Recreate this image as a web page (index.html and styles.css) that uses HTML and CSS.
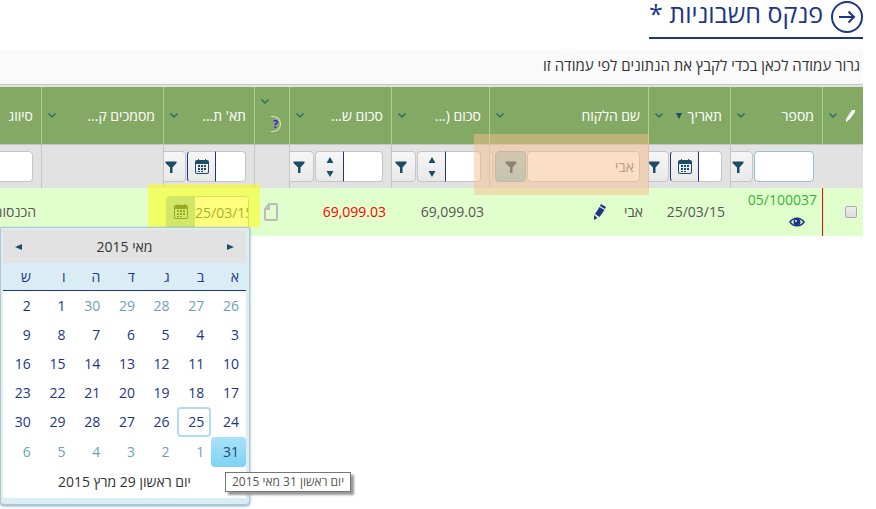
FILE: index.html
```html
<!DOCTYPE html>
<html lang="he" dir="rtl">
<head>
    <meta charset="UTF-8">
    <meta name="viewport" content="width=device-width, initial-scale=1.0">
    <title>פנקס חשבוניות</title>
    <link rel="stylesheet" href="styles.css">
</head>
<body>
    <!-- shared icons -->
    <svg class="sprite" aria-hidden="true">
        <symbol id="funnel" viewBox="0 0 12 12"><path d="M0.500 0.500h11v1.500L7.500 6.500V12H5V6.500L0.500 2z"/></symbol>
        <symbol id="cal" viewBox="0 0 14 16">
            <path fill-rule="evenodd" d="M2 1h10a2 2 0 0 1 2 2v10a2 2 0 0 1-2 2H2a2 2 0 0 1-2-2V3a2 2 0 0 1 2-2zM1 5v8a1 1 0 0 0 1 1h10a1 1 0 0 0 1-1V5z"/>
            <path d="M3 0h1v3H3zM10 0h1v3h-1zM6 6h2v2H6zM9 6h2v2H9zM3 9h2v2H3zM6 9h2v2H6zM9 9h2v2H9zM3 12h2v1H3zM6 12h2v1H6zM3 6h2v2H3z"/>
        </symbol>
        <symbol id="down" viewBox="0 0 8 5"><path d="M0.500 0.500L4 4l3.500-3.500" fill="none" stroke="currentColor" stroke-width="1.400"/></symbol>
        <symbol id="spin" viewBox="0 0 8 22"><path d="M4 1l3.500 6h-7zM4 21l3.500-6h-7z"/></symbol>
    </svg>

    <main class="page">
        <header class="title">
            <a href="#" class="back" aria-label="חזרה">
                <svg width="32" height="32" viewBox="0 0 32 32"><circle cx="16" cy="16" r="15"/><path d="M8 16h15M17.500 10.500L23 16l-5.500 5.500"/></svg>
            </a>
            <h1>פנקס חשבוניות *</h1>
        </header>

        <div class="group-bar">גרור עמודה לכאן בכדי לקבץ את הנתונים לפי עמודה זו</div>

        <div class="grid">
            <table>
                <colgroup>
                    <col class="c-check"><col class="c-num"><col class="c-date"><col class="c-client"><col class="c-sum">
                    <col class="c-sum2"><col class="c-doc"><col class="c-tax"><col class="c-docs"><col>
                </colgroup>
                <thead>
                    <tr class="head">
                        <th><div class="th"><svg class="edit" width="9" height="12" viewBox="0 0 9 12"><path d="M6 0h3v2L4 9l-4 3V9z"/></svg><svg class="arrow"><use href="#down"/></svg></div></th>
                        <th><div class="th">מספר<svg class="arrow"><use href="#down"/></svg></div></th>
                        <th><div class="th">תאריך<svg class="sort" width="6" height="6" viewBox="0 0 6 6"><path d="M0 0h6L3 6z"/></svg><svg class="arrow"><use href="#down"/></svg></div></th>
                        <th><div class="th">שם הלקוח<svg class="arrow"><use href="#down"/></svg></div></th>
                        <th><div class="th">סכום (...<svg class="arrow"><use href="#down"/></svg></div></th>
                        <th><div class="th">סכום ש...<svg class="arrow"><use href="#down"/></svg></div></th>
                        <th><div class="th stacked"><svg class="arrow"><use href="#down"/></svg><span class="help">?</span></div></th>
                        <th><div class="th">תא' ת...<svg class="arrow"><use href="#down"/></svg></div></th>
                        <th><div class="th">מסמכים ק...<svg class="arrow"><use href="#down"/></svg></div></th>
                        <th><div class="th">סיווג</div></th>
                    </tr>
                    <tr class="filters">
                        <td class="bare"></td>
                        <td><div class="filter"><input type="text" class="w-num active" aria-label="סינון מספר"><button type="button" class="btn" aria-label="סנן"><svg class="funnel"><use href="#funnel"/></svg></button></div></td>
                        <td><div class="filter"><input type="text" class="w-date joined" aria-label="סינון תאריך"><button type="button" class="btn pick" aria-label="בחר תאריך"><svg class="cal"><use href="#cal"/></svg></button><button type="button" class="btn" aria-label="סנן"><svg class="funnel"><use href="#funnel"/></svg></button></div></td>
                        <td class="marked"><div class="filter"><input type="text" class="w-client" value="אבי" aria-label="סינון לקוח"><button type="button" class="btn pressed" aria-label="סנן"><svg class="funnel"><use href="#funnel"/></svg></button><span class="btn"></span></div><span class="mark orange"></span></td>
                        <td><div class="filter"><input type="text" class="w-sum joined" aria-label="סינון סכום"><button type="button" class="btn spin" aria-label="שנה ערך"><svg width="8" height="22"><use href="#spin"/></svg></button><button type="button" class="btn" aria-label="סנן"><svg class="funnel"><use href="#funnel"/></svg></button></div></td>
                        <td><div class="filter"><input type="text" class="w-sum2 joined" aria-label="סינון סכום שקלי"><button type="button" class="btn spin" aria-label="שנה ערך"><svg width="8" height="22"><use href="#spin"/></svg></button><button type="button" class="btn" aria-label="סנן"><svg class="funnel"><use href="#funnel"/></svg></button></div></td>
                        <td></td>
                        <td><div class="filter"><input type="text" class="w-tax joined" aria-label="סינון תאריך מס"><button type="button" class="btn pick" aria-label="בחר תאריך"><svg class="cal"><use href="#cal"/></svg></button><button type="button" class="btn" aria-label="סנן"><svg class="funnel"><use href="#funnel"/></svg></button></div></td>
                        <td></td>
                        <td><div class="filter"><input type="text" class="w-kind" aria-label="סינון סיווג"></div></td>
                    </tr>
                </thead>
                <tbody>
                    <tr class="row">
                        <td class="select"><input type="checkbox" aria-label="בחר שורה"></td>
                        <td class="number"><a href="#">05/100037</a><svg class="eye" width="16" height="10" viewBox="0 0 16 10"><path fill-rule="evenodd" d="M0 5Q3 0.500 8 0.500T16 5Q13 9.500 8 9.500T0 5zM2 5q2 3 6 3t6-3q-2-3-6-3T2 5z"/><circle cx="8" cy="5" r="3.500"/><circle class="glint" cx="7" cy="4" r="1"/></svg></td>
                        <td>25/03/15</td>
                        <td><div class="client">אבי<svg width="12" height="16" viewBox="0 0 12 16"><path d="M7 0l5 3-1 2-5-3zM5.500 3l5 3-5 7-4.500-3zM0 11l3.500 3L0 16z"/></svg></div></td>
                        <td>69,099.03</td>
                        <td class="red">69,099.03</td>
                        <td class="file"><svg width="14" height="18" viewBox="0 0 14 18"><path d="M5 1h7q1 0 1 1v14q0 1-1 1H2q-1 0-1-1V6zM5 1v5H1"/></svg></td>
                        <td class="editing"><div class="date-edit"><input type="text" value="25/03/15" aria-label="תאריך מס"><button type="button" aria-label="בחר תאריך"><svg class="cal"><use href="#cal"/></svg></button></div></td>
                        <td></td>
                        <td class="kind">הכנסות</td>
                    </tr>
                </tbody>
            </table>
        </div>

        <span class="mark yellow"></span>

        <section class="calendar">
            <div class="cal-title">
                <button type="button" aria-label="חודש קודם"><svg width="7" height="6" viewBox="0 0 7 6"><path d="M0 0l7 3-7 3z"/></svg></button>
                <span>מאי 2015</span>
                <button type="button" aria-label="חודש הבא"><svg width="7" height="6" viewBox="0 0 7 6"><path d="M7 0L0 3l7 3z"/></svg></button>
            </div>
            <table class="days">
                <thead>
                    <tr><th>א</th><th>ב</th><th>ג</th><th>ד</th><th>ה</th><th>ו</th><th>ש</th></tr>
                </thead>
                <tbody>
                    <tr><td class="other">26</td><td class="other">27</td><td class="other">28</td><td class="other">29</td><td class="other">30</td><td>1</td><td>2</td></tr>
                    <tr><td>3</td><td>4</td><td>5</td><td>6</td><td>7</td><td>8</td><td>9</td></tr>
                    <tr><td>10</td><td>11</td><td>12</td><td>13</td><td>14</td><td>15</td><td>16</td></tr>
                    <tr><td>17</td><td>18</td><td>19</td><td>20</td><td>21</td><td>22</td><td>23</td></tr>
                    <tr><td>24</td><td class="chosen">25</td><td>26</td><td>27</td><td>28</td><td>29</td><td>30</td></tr>
                    <tr><td class="hovered">31</td><td class="other">1</td><td class="other">2</td><td class="other">3</td><td class="other">4</td><td class="other">5</td><td class="other">6</td></tr>
                </tbody>
            </table>
            <div class="cal-footer">יום ראשון 29 מרץ 2015</div>
            <div class="tooltip" role="tooltip">יום ראשון 31 מאי 2015</div>
        </section>
    </main>
</body>
</html>
```

FILE: styles.css
```css
* {
    box-sizing: border-box;
}

body {
    margin: 0;
    font-family: "Open Sans", "Noto Sans", sans-serif;
    font-size: 14px;
    line-height: 20px;
    color: #555;
    background-color: #fff;
}

button, input {
    font: inherit;
    margin: 0;
    padding: 0;
}

svg {
    flex: none;
    fill: currentColor;
}

.sprite {
    position: absolute;
    width: 0;
    height: 0;
}

.page {
    position: relative;
    min-height: 100vh;
    margin-right: 13px;
}

/* title */
.title {
    display: flex;
    align-items: flex-start;
    gap: 8px;
    width: fit-content;
    height: 39px;
    border-bottom: 2px solid #1c3586;
    color: #1c3586;
}

.back {
    height: 32px;
    margin-top: 1px;
    color: inherit;
}

.back svg {
    fill: none;
    stroke: currentColor;
    stroke-width: 2;
}

h1 {
    margin: 0;
    font-size: 25px;
    font-weight: normal;
    line-height: 26px;
}

.group-bar {
    height: 36px;
    margin-top: 10px;
    padding: 6px 3px;
    background-color: #fafafa;
    border-bottom: 1px solid #c5c5c5;
    color: #333;
    font-size: 15px;
}

/* grid */
.grid {
    overflow: hidden;
    padding-top: 2px;
    background-color: #e2e2e2;
}

table {
    width: 100%;
    border-collapse: separate;
    border-spacing: 0;
    table-layout: fixed;
}

.c-check { width: 41px; }
.c-num { width: 92px; }
.c-date { width: 82px; }
.c-client { width: 159px; }
.c-sum { width: 98px; }
.c-sum2 { width: 102px; }
.c-doc { width: 35px; }
.c-tax { width: 91px; }
.c-docs { width: 122px; }

th, td {
    padding: 0;
}

.head th {
    height: 57px;
    padding: 0 8px 0 6px;
    background-color: #84a964;
    border-left: 1px solid #a9d487;
    color: #fff;
    font-weight: normal;
    white-space: nowrap;
}

.head th:last-child {
    border-left: 0;
}

.th {
    display: flex;
    align-items: center;
    gap: 6px;
}

.arrow {
    width: 8px;
    height: 5px;
    margin-right: auto;
    color: #2a6a66;
}

.sort {
    color: #1b4d68;
}

.stacked {
    flex-direction: column;
    align-items: flex-end;
    gap: 12px;
}

.help {
    align-self: flex-start;
    width: 10px;
    height: 16px;
    border: 1px solid #dbe8cf;
    border-left: 0;
    border-radius: 0 8px 8px 0;
    color: #4a10e0;
    font-size: 11px;
    font-weight: bold;
    line-height: 14px;
}

.filters td {
    height: 44px;
    background-color: #e2e2e2;
    border-top: 1px solid #c5c5c5;
    border-left: 1px solid #c5c5c5;
}

.filters .bare, .filters td:last-child {
    border-left: 0;
}

.filter {
    display: flex;
    gap: 1px;
    overflow: hidden;
    padding-right: 8px;
}

.filter input {
    flex: none;
    height: 31px;
    padding: 0 5px;
    background-color: #fff;
    border: 1px solid #c5c5c5;
    border-radius: 4px;
    color: #777;
}

.filter .joined {
    margin-left: -1px;
    border-left: 1px solid #1c3586;
    border-radius: 0 4px 4px 0;
}

.filter .active {
    border-color: #94c0d2;
}

.w-num { width: 60px; }
.w-date { width: 24px; }
.w-client { width: 113px; }
.w-sum { width: 36px; }
.w-sum2 { width: 40px; }
.w-tax { width: 31px; }
.w-kind { width: 60px; }

.btn {
    display: flex;
    flex: none;
    align-items: center;
    justify-content: center;
    width: 31px;
    height: 31px;
    background: linear-gradient(#f6f6f6, #e9e9e9);
    border: 1px solid #c5c5c5;
    border-radius: 4px;
    color: #1b4d68;
}

.pick, .spin {
    width: 28px;
    border-right: 0;
    border-radius: 4px 0 0 4px;
}

.pick {
    border-left: 1px solid #1c3586;
}

.pressed {
    margin-left: 1px;
    background: linear-gradient(#b3ccd0, #8bccd8);
    border-color: #8fb6ba;
    color: #1b4d4a;
}

.funnel {
    width: 12px;
    height: 12px;
}

.cal {
    width: 14px;
    height: 16px;
}

/* highlights over the fields */
.marked {
    position: relative;
}

.mark {
    position: absolute;
    pointer-events: none;
}

.orange {
    top: -11px;
    right: -1px;
    width: 175px;
    height: 61px;
    background-color: rgba(247, 189, 141, 0.5);
}

.yellow {
    z-index: 1;
    top: 184px;
    left: 148px;
    width: 112px;
    height: 43px;
    background-color: rgba(255, 255, 0, 0.5);
}

/* data row */
.row td {
    height: 48px;
    padding: 0 5px;
    background-color: #e1ffcd;
    white-space: nowrap;
}

.row .select {
    padding: 0 6px;
    border-left: 1px solid #f00;
}

.select input {
    appearance: none;
    display: block;
    width: 12px;
    height: 12px;
    background: linear-gradient(#eee, #ddd);
    border: 1px solid #aaa;
    border-radius: 2px;
}

.row .number {
    vertical-align: top;
    padding-top: 2px;
}

.number a {
    display: block;
    color: #33b533;
    text-decoration: none;
}

.eye {
    display: block;
    margin: 7px 12px 0;
    color: #1c3586;
}

.glint {
    fill: #e1ffcd;
}

.client {
    display: flex;
    align-items: center;
    gap: 18px;
}

.client svg {
    color: #1c3586;
}

.row .red {
    color: #f00;
}

.row .file {
    padding-right: 11px;
}

.file svg {
    display: block;
    fill: none;
    stroke: #bbb;
    stroke-width: 2;
}

.row .editing {
    padding: 0 5px 0 3px;
    vertical-align: bottom;
}

.date-edit {
    display: flex;
    overflow: hidden;
    height: 40px;
    border: 1px solid #b5c9a5;
    border-radius: 4px 4px 0 0;
}

.date-edit input {
    flex: 1;
    min-width: 0;
    height: 30px;
    border: 0;
    color: #555;
    direction: ltr;
}

.date-edit button {
    display: flex;
    align-items: center;
    justify-content: center;
    width: 28px;
    height: 30px;
    background-color: #a3cfd0;
    border: 0;
    color: #33524a;
}

.row .kind {
    overflow: hidden;
}

/* calendar popup */
.calendar {
    position: absolute;
    z-index: 2;
    top: 227px;
    left: 0;
    width: 250px;
    padding: 2px 3px 6px 2px;
    background-color: #daecf4;
    border: 1px solid #b9c3c8;
    border-radius: 0 0 4px 4px;
    box-shadow: 0 1px 3px #6ba6c2;
    color: #1c3586;
}

.cal-title {
    display: flex;
    align-items: center;
    justify-content: space-between;
    height: 33px;
    padding: 0 12px;
    background-color: #e2e2e2;
    color: #333;
}

.cal-title button {
    display: flex;
    background: none;
    border: 0;
    color: #1b4d68;
}

.days {
    background-color: #fff;
}

.days th {
    height: 28px;
    padding: 0 7px;
    background-color: #daecf4;
    border-bottom: 1px solid #1c3586;
    font-weight: normal;
    text-align: right;
}

.days td {
    height: 29px;
    padding: 0 7px;
    text-align: right;
}

.days .other {
    color: #6c9fbb;
}

.days .chosen {
    height: 30px;
    padding: 0 5px;
    border: 2px solid #b0dcef;
    border-radius: 4px;
}

.days .hovered {
    height: 30px;
    background: linear-gradient(#a9e1fa, #7dd2f5);
    border-radius: 4px;
    color: #1b4d68;
}

.cal-footer {
    height: 31px;
    padding-top: 5px;
    background-color: #fff;
    color: #333;
    text-align: center;
}

.tooltip {
    position: absolute;
    top: 244px;
    left: 224px;
    height: 20px;
    padding: 0 6px;
    background-color: #fff;
    border: 1px solid #767676;
    box-shadow: 3px 3px 2px #999;
    color: #555;
    font-size: 12px;
    line-height: 18px;
    white-space: nowrap;
}
```
